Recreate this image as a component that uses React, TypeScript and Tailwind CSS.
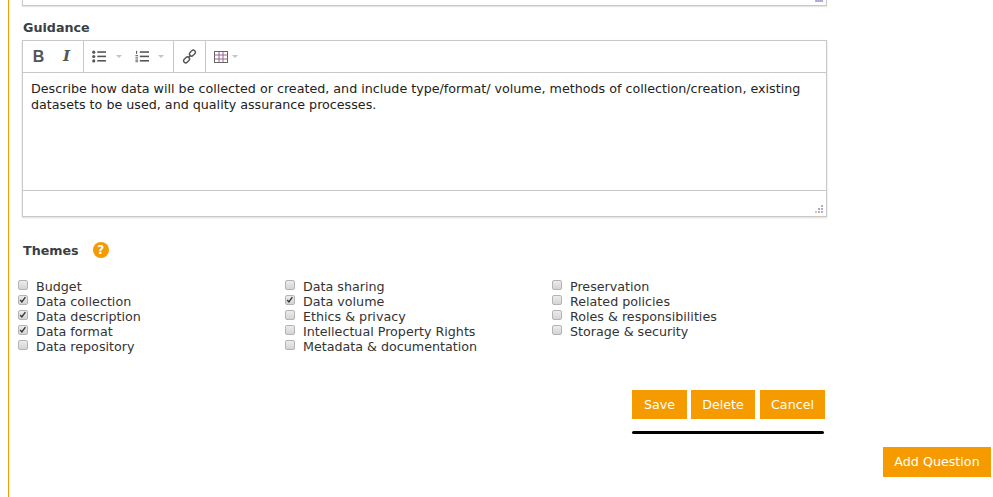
import React from "react";

const Check = ({ on }: { on?: boolean }) => (
  <span className="relative block w-[10px] h-[10px] mt-[-4px] rounded-[2px] border border-[#b4b4b4] bg-[linear-gradient(#ececec,#d4d4d4)] shrink-0">
    {on && (
      <svg viewBox="0 0 10 10" className="absolute left-[0px] top-[0px] w-[8px] h-[8px]">
        <path d="M1.5 5 L3.6 7.4 L8 1.5" fill="none" stroke="#333" strokeWidth="1.7" />
      </svg>
    )}
  </span>
);

const Theme = ({ label, on }: { label: string; on?: boolean }) => (
  <div className="flex items-center h-[15px] gap-[8px]">
    <Check on={on} />
    <span>{label}</span>
  </div>
);

const Sep = () => <span className="w-px h-full bg-[#c8c8c8]" />;

const Caret = () => <span className="block w-0 h-0 border-x-[3px] border-x-transparent border-t-[3px] border-t-[#c4c4c4]" />;

const columns: [string, boolean?][][] = [
  [["Budget"], ["Data collection", true], ["Data description", true], ["Data format", true], ["Data repository"]],
  [["Data sharing"], ["Data volume", true], ["Ethics & privacy"], ["Intellectual Property Rights"], ["Metadata & documentation"]],
  [["Preservation"], ["Related policies"], ["Roles & responsibilities"], ["Storage & security"]],
];

const Btn = ({ w, children }: { w: string; children: React.ReactNode }) => (
  <button className={`${w} h-[29px] bg-[#f59b00] text-white text-[12.7px] text-center`}>{children}</button>
);

export default function App() {
  return (
    <div className="w-[993px] h-[497px] overflow-hidden bg-white text-[#333] text-[12.7px] leading-[15px] font-['DejaVu_Sans',sans-serif]">
      <div className="ml-[8px] w-[985px] h-[497px] border-l border-l-[#f59b00]">
        <div className="ml-[13px] w-[805px] h-[6px] border-x border-b border-[#c8c8c8] shadow-[0_1px_1px_rgba(0,0,0,0.1)] flex justify-end">
          <span className="mr-[3px] w-[8px] h-[2px] bg-[repeating-linear-gradient(90deg,#d9b08c_0_1px,#a9a9d9_1px_2px)]" />
        </div>
        <div className="ml-[14px] mt-[13px] h-[17px] font-bold text-[#3a3f45] leading-[17px]">Guidance</div>
        <div className="ml-[13px] mt-[4px] w-[805px] h-[177px] border border-[#c8c8c8] shadow-[0_1px_2px_rgba(0,0,0,0.15)] flex flex-col">
          <div className="h-[32px] flex items-center border-b border-[#c8c8c8] text-[#555]">
            <div className="w-[60px] h-full flex items-center">
              <span className="ml-[9px] w-[13px] text-center font-bold text-[16px] font-['Liberation_Sans',sans-serif]">B</span>
              <span className="ml-[15px] w-[13px] text-center font-bold italic text-[15px] font-['DejaVu_Serif',serif]">I</span>
            </div>
            <Sep />
            <div className="w-[89px] h-full flex items-center">
              <svg viewBox="0 0 16 14" className="ml-[8px] w-[14px] h-[13px]">
                <g fill="#555"><circle cx="2" cy="2" r="1.8" /><circle cx="2" cy="7" r="1.8" /><circle cx="2" cy="12" r="1.8" /><rect x="6" y="1" width="10" height="1.8" /><rect x="6" y="6" width="10" height="1.8" /><rect x="6" y="11" width="10" height="1.8" /></g>
              </svg>
              <span className="ml-[10px]"><Caret /></span>
              <svg viewBox="0 0 16 14" className="ml-[13px] w-[14px] h-[13px]">
                <g fill="#555"><rect x="1.2" y="0.5" width="1.2" height="3.5" /><rect x="0.5" y="5.5" width="3" height="1.2" /><rect x="0.5" y="8" width="3" height="1.2" /><rect x="0.5" y="10.5" width="3" height="1.2" /><rect x="0.5" y="12.5" width="3" height="1" /><rect x="5.5" y="1" width="10.5" height="1.8" /><rect x="5.5" y="6" width="10.5" height="1.8" /><rect x="5.5" y="11" width="10.5" height="1.8" /></g>
              </svg>
              <span className="ml-[9px]"><Caret /></span>
            </div>
            <Sep />
            <div className="w-[31px] h-full flex items-center justify-center">
              <svg viewBox="0 0 16 16" className="w-[15px] h-[15px]" fill="none" stroke="#555" strokeWidth="1.5">
                <path d="M6.5 9.5 L9.5 6.5" />
                <rect x="7.6" y="2.2" width="7" height="4.4" rx="2.2" transform="rotate(-45 11.1 4.4)" />
                <rect x="1.4" y="9.4" width="7" height="4.4" rx="2.2" transform="rotate(-45 4.9 11.6)" />
              </svg>
            </div>
            <Sep />
            <div className="h-full flex items-center">
              <svg viewBox="0 0 14 12" className="ml-[8px] w-[14px] h-[12px]" fill="none" strokeWidth="1">
                <path d="M0.5 4H13.5M0.5 8H13.5" stroke="#a66" />
                <path d="M5 0.5V11.5M9 0.5V11.5" stroke="#86a" />
                <rect x="0.5" y="0.5" width="13" height="11" stroke="#666" />
              </svg>
              <span className="ml-[4px]"><Caret /></span>
            </div>
          </div>
          <div className="h-[118px] border-b border-[#c8c8c8] px-[8px] pt-[8px] text-[#222] leading-[16px]">
            Describe how data will be collected or created, and include type/format/ volume, methods of collection/creation, existing datasets to be used, and quality assurance processes.
          </div>
          <div className="flex-1 flex items-end justify-end pr-[3px] pb-[3px]">
            <svg viewBox="0 0 8 8" className="w-[8px] h-[8px]">
              <g fill="#b9a9c9"><rect x="6" y="0" width="2" height="2" /><rect x="3" y="3" width="2" height="2" fill="#9bb0d0" /><rect x="6" y="3" width="2" height="2" /><rect x="0" y="6" width="2" height="2" fill="#e0c0a0" /><rect x="3" y="6" width="2" height="2" fill="#d0a8a8" /><rect x="6" y="6" width="2" height="2" /></g>
            </svg>
          </div>
        </div>
        <div className="ml-[14px] mt-[23px] h-[20px] flex items-center">
          <span className="font-bold text-[#3a3f45]">Themes</span>
          <span className="ml-[14px] w-[16px] h-[16px] rounded-full bg-[#f59b00] text-white font-bold text-[12px] leading-[16px] text-center">?</span>
        </div>
        <div className="ml-[9px] mt-[19px] flex h-[75px]">
          {columns.map((c, i) => (
            <div key={i} className="w-[267px]">
              {c.map(([l, on]) => (
                <Theme key={l} label={l} on={on} />
              ))}
            </div>
          ))}
        </div>
        <div className="ml-[623px] mt-[36px] w-[193px] flex gap-[4px]">
          <Btn w="w-[55px]">Save</Btn>
          <Btn w="w-[64px]">Delete</Btn>
          <Btn w="w-[65px] ml-[1px]">Cancel</Btn>
        </div>
        <div className="ml-[623px] mt-[12px] w-[192px] h-[3px] rounded-full bg-black" />
        <div className="mt-[13px] pr-[2px] flex justify-end">
          <button className="w-[108px] h-[30px] pb-[2px] bg-[#f59b00] text-white text-[12.7px] text-center">Add Question</button>
        </div>
      </div>
    </div>
  );
}
